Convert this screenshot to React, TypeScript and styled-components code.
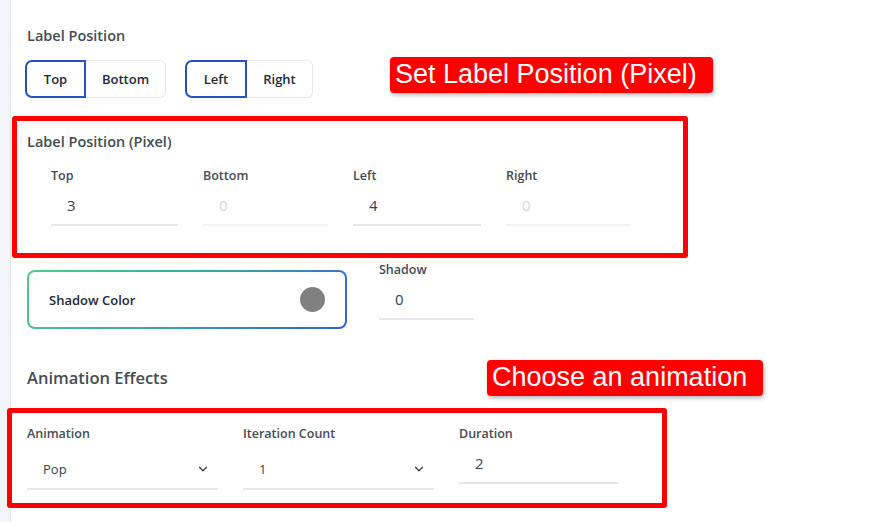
import { FC } from "react"
import styled, { createGlobalStyle } from "styled-components"

const GlobalStyle = createGlobalStyle`
  html, body {
    margin: 0;
    padding: 0;
    background: #fff;
  }
  body {
    font-family: "Open Sans", "Noto Sans", sans-serif;
    color: #3c434a;
  }
`

const Page = styled.div`
  display: flex;
  min-height: 522px;
  width: 883px;
  overflow: hidden;
`

const Rail = styled.div`
  flex: 0 0 10px;
  background: #f3f5f8;
  border-right: 1px solid #e3e7ec;
`

const Main = styled.div`
  flex: 1;
  padding-left: 16px;
  padding-top: 26px;
  display: flex;
  flex-direction: column;
  align-items: flex-start;
`

const Heading = styled.h3<{ $size?: number }>`
  margin: 0;
  font-size: ${(p) => p.$size ?? 14.5}px;
  line-height: 20px;
  font-weight: 600;
  color: #454b52;
`

const SectionTitle = styled(Heading)`
  width: 460px;
  line-height: 36px;
`

const Row = styled.div<{ $top?: number }>`
  display: flex;
  align-items: flex-start;
  margin-top: ${(p) => p.$top ?? 0}px;
`

const Segmented = styled.div<{ $gap?: number }>`
  display: flex;
  margin-left: ${(p) => p.$gap ?? 0}px;
`

const SegButton = styled.button<{ $active?: boolean; $w: number; $side: "l" | "r" }>`
  width: ${(p) => p.$w}px;
  height: 38px;
  box-sizing: border-box;
  background: #fff;
  font-family: inherit;
  font-size: 13px;
  font-weight: 600;
  color: #1f2937;
  cursor: pointer;
  border: ${(p) => (p.$active ? "2px solid #2a4fc7" : "1px solid #e5e7eb")};
  ${(p) => (p.$side === "r" ? "border-left: none;" : "")}
  border-radius: ${(p) => (p.$side === "l" ? "7px 0 0 7px" : "0 6px 6px 0")};
`

const Callout = styled.div<{ $gap?: number; $top?: number }>`
  margin-left: ${(p) => p.$gap ?? 0}px;
  margin-top: ${(p) => p.$top ?? 0}px;
  background: #ff0000;
  color: #fff;
  font-family: "Liberation Sans", Arial, sans-serif;
  font-size: 27px;
  line-height: 35px;
  height: 36px;
  padding: 0 16px 0 5px;
  border-radius: 4px;
  box-shadow: 1px 2px 4px rgba(0, 0, 0, 0.3);
  white-space: nowrap;
`

const Highlight = styled.div<{ $left: number; $w: number; $h: number; $top: number }>`
  margin-left: ${(p) => p.$left}px;
  margin-top: ${(p) => p.$top}px;
  width: ${(p) => p.$w}px;
  height: ${(p) => p.$h}px;
  box-sizing: border-box;
  border: 5px solid #ff0000;
  border-radius: 3px;
`

const PixelInner = styled.div`
  padding: 11px 0 0 10px;
`

const FieldGrid = styled.div<{ $cols: string; $pad: number; $top: number }>`
  display: grid;
  grid-template-columns: ${(p) => p.$cols};
  column-gap: 25px;
  padding-left: ${(p) => p.$pad}px;
  margin-top: ${(p) => p.$top}px;
  align-items: start;
`

const Field = styled.div`
  display: flex;
  flex-direction: column;
`

const FieldLabel = styled.label`
  font-size: 12.5px;
  line-height: 18px;
  font-weight: 600;
  color: #454b55;
`

const NumberBox = styled.div<{ $muted?: boolean; $h?: number; $w?: number }>`
  height: ${(p) => p.$h ?? 41}px;
  ${(p) => (p.$w ? `width: ${p.$w}px;` : "")}
  box-sizing: border-box;
  border-bottom: 2px solid ${(p) => (p.$muted ? "#f1f2f4" : "#e5e7eb")};
  padding-left: 16px;
  display: flex;
  align-items: center;
  font-size: 15px;
  color: ${(p) => (p.$muted ? "#d4d7dc" : "#3c434a")};
`

const SelectBox = styled.div`
  height: 47px;
  box-sizing: border-box;
  border-bottom: 2px solid #e5e7eb;
  padding: 6px 8px 0 16px;
  display: flex;
  align-items: center;
  justify-content: space-between;
  font-size: 13px;
  color: #3c434a;
`

const ColorCard = styled.div`
  margin-top: 9px;
  width: 320px;
  height: 59px;
  box-sizing: border-box;
  border: 2px solid transparent;
  border-radius: 8px;
  background:
    linear-gradient(#fff, #fff) padding-box,
    linear-gradient(135deg, #52cc86, #3a9fb0 55%, #2f5fd8) border-box;
  display: flex;
  align-items: center;
  justify-content: space-between;
  padding: 0 20px;
`

const CardTitle = styled.span`
  font-size: 13px;
  font-weight: 600;
  color: #1f2937;
`

const Swatch = styled.span<{ $color: string }>`
  width: 25px;
  height: 25px;
  border-radius: 50%;
  background: ${(p) => p.$color};
`

const ShadowField = styled(Field)`
  margin-left: 32px;
`

const AnimInner = styled.div`
  padding: 12px 0 0 15px;
`

const Chevron: FC = () => (
  <svg width="14" height="14" viewBox="0 0 24 24" fill="none" stroke="#3c434a" strokeWidth="2.4" strokeLinecap="round" strokeLinejoin="round">
    <path d="M6 9l6 6 6-6" />
  </svg>
)

const pixelFields = [
  { label: "Top", value: "3" },
  { label: "Bottom", value: "0", muted: true },
  { label: "Left", value: "4" },
  { label: "Right", value: "0", muted: true },
]

const App: FC = () => (
  <>
    <GlobalStyle />
    <Page>
      <Rail />
      <Main>
        <Heading>Label Position</Heading>
        <Row $top={14}>
          <Segmented $gap={-2}>
            <SegButton $active $w={61} $side="l">Top</SegButton>
            <SegButton $w={80} $side="r">Bottom</SegButton>
          </Segmented>
          <Segmented $gap={19}>
            <SegButton $active $w={62} $side="l">Left</SegButton>
            <SegButton $w={66} $side="r">Right</SegButton>
          </Segmented>
          <Callout $gap={77} $top={-3}>Set Label Position (Pixel)</Callout>
        </Row>

        <Highlight $left={-15} $top={18} $w={676} $h={142}>
          <PixelInner>
            <Heading>Label Position (Pixel)</Heading>
            <FieldGrid $cols="127px 125px 128px 125px" $pad={24} $top={15}>
              {pixelFields.map((f) => (
                <Field key={f.label}>
                  <FieldLabel>{f.label}</FieldLabel>
                  <NumberBox $muted={f.muted}>{f.value}</NumberBox>
                </Field>
              ))}
            </FieldGrid>
          </PixelInner>
        </Highlight>

        <Row $top={3}>
          <ColorCard>
            <CardTitle>Shadow Color</CardTitle>
            <Swatch $color="#808080" />
          </ColorCard>
          <ShadowField>
            <FieldLabel>Shadow</FieldLabel>
            <NumberBox $w={95}>0</NumberBox>
          </ShadowField>
        </Row>

        <Row $top={31}>
          <SectionTitle as="div" $size={16.5}>
            Animation Effects
          </SectionTitle>
          <Callout>Choose an animation</Callout>
        </Row>

        <Highlight $left={-20} $top={12} $w={660} $h={100}>
          <AnimInner>
            <FieldGrid $cols="191px 191px 160px" $pad={0} $top={0}>
              <Field>
                <FieldLabel>Animation</FieldLabel>
                <SelectBox>
                  <span>Pop</span>
                  <Chevron />
                </SelectBox>
              </Field>
              <Field>
                <FieldLabel>Iteration Count</FieldLabel>
                <SelectBox>
                  <span>1</span>
                  <Chevron />
                </SelectBox>
              </Field>
              <Field>
                <FieldLabel>Duration</FieldLabel>
                <NumberBox>2</NumberBox>
              </Field>
            </FieldGrid>
          </AnimInner>
        </Highlight>
      </Main>
    </Page>
  </>
)

export default App
